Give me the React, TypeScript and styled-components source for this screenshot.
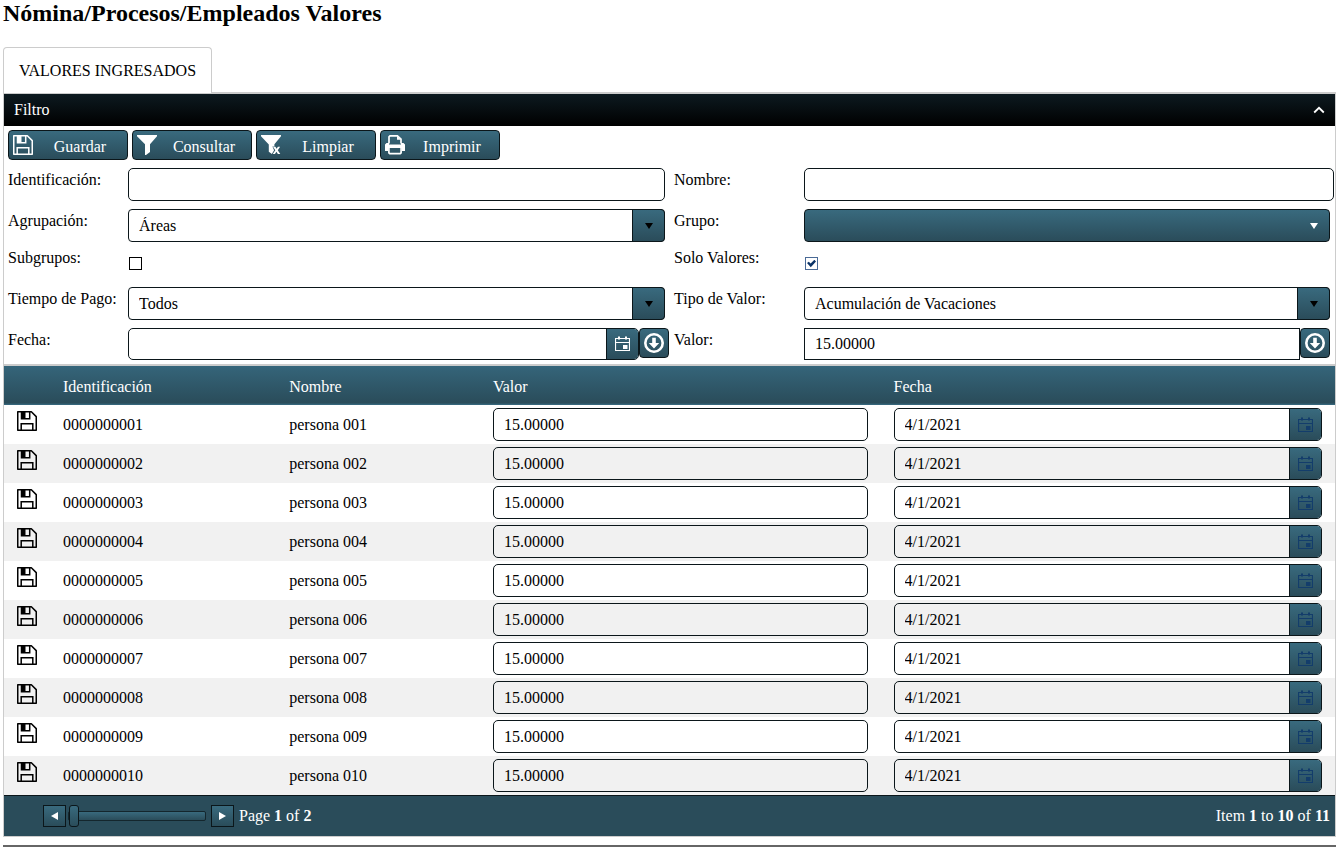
import React, { useState } from "react";
import styled, { createGlobalStyle, css } from "styled-components";

const ink = "#0b161a";
const steel = "linear-gradient(to bottom, #396a7e 0%, #2a4c5a 100%)";
const line = "#cccccc";

const GlobalStyle = createGlobalStyle`
  * { box-sizing: border-box; }
  body {
    margin: 0;
    background: #fff;
    color: #000;
    font: 16px/18px "Liberation Serif", "Times New Roman", serif;
  }
  button, input, select { font: inherit; color: inherit; margin: 0; }
`;

const Page = styled.main`
  padding: 0 5px 0 3px;
`;

const Title = styled.h1`
  margin: 0 0 20px;
  font-size: 24px;
  line-height: 27px;
  font-weight: bold;
`;

const Tabs = styled.div`
  display: flex;
`;

const Tab = styled.button`
  height: 46px;
  padding: 0 15px;
  margin-bottom: -1px;
  border: 1px solid ${line};
  border-bottom: 0;
  border-radius: 4px 4px 0 0;
  background: #fff;
  z-index: 1;
`;

const Panel = styled.section`
  border: 1px solid ${line};
  border-top-width: 2px;
`;

const FilterHeader = styled.header`
  display: flex;
  align-items: center;
  justify-content: space-between;
  height: 32px;
  padding: 0 10px;
  color: #fff;
  background: linear-gradient(to bottom, #0d1a20 0%, #000 100%);
`;

const FilterTitle = styled.h2`
  margin: 0;
  font-size: 16px;
  font-weight: normal;
`;

const CollapseButton = styled.button`
  display: flex;
  padding: 0;
  border: 0;
  background: none;
  color: #fff;
`;

const Toolbar = styled.div`
  display: flex;
  gap: 4px;
  padding: 4px;
`;

const ToolButton = styled.button`
  display: flex;
  align-items: center;
  width: 120px;
  height: 30px;
  padding: 0 0 0 4px;
  border: 1px solid ${ink};
  border-radius: 4px;
  color: #fff;
  background: ${steel};
`;

const ToolText = styled.span`
  flex: 1;
  padding-top: 3px;
  text-align: center;
`;

const Filters = styled.form`
  display: grid;
  grid-template-columns: 120px minmax(0, 541fr) 135px minmax(0, 526fr);
  padding: 0 5px 0 4px;
`;

const Label = styled.label<{ $compact?: boolean; $second?: boolean }>`
  padding-top: ${(p) => (p.$compact ? 3 : 7)}px;
  padding-left: ${(p) => (p.$second ? 5 : 0)}px;
  white-space: nowrap;
`;

const Field = styled.div<{ $inset?: boolean; $wide?: boolean }>`
  display: flex;
  align-items: flex-start;
  padding: 4px 0;
  margin-right: ${(p) => (p.$inset ? 4 : p.$wide ? -4 : 0)}px;
`;

const CheckField = styled.div`
  height: 37px;
  padding: 11px 0 0 1px;
  line-height: 0;
`;

const TextInput = styled.input<{ $square?: boolean; $short?: boolean }>`
  flex: 1;
  min-width: 0;
  width: 100%;
  height: ${(p) => (p.$short ? 32 : 33)}px;
  padding: 0 10px;
  border: 1px solid ${ink};
  border-radius: ${(p) => (p.$square ? 0 : 5)}px;
  background: transparent;
  outline: none;
`;

const SelectBox = styled.div`
  flex: 1;
  display: grid;
  grid-template-columns: minmax(0, 1fr) 33px;
  height: 33px;
`;

const Select = styled.select<{ $filled?: boolean }>`
  grid-row: 1;
  grid-column: 1 / 3;
  appearance: none;
  padding: 0 10px;
  border: 1px solid ${ink};
  border-radius: 4px;
  background: ${(p) => (p.$filled ? steel : "#fff")};
  outline: none;
`;

const SelectArrow = styled.span<{ $plain?: boolean }>`
  grid-row: 1;
  grid-column: 2;
  display: flex;
  align-items: center;
  justify-content: center;
  pointer-events: none;
  border: 1px solid transparent;
  color: #fff;
  ${(p) =>
    !p.$plain &&
    css`
      border-color: ${ink};
      border-radius: 0 4px 4px 0;
      background: ${steel};
      color: #000;
    `}
`;

const CheckBox = styled.input`
  appearance: none;
  display: inline-grid;
  place-items: center;
  width: 13px;
  height: 13px;
  border: 1px solid #000;
  background: #fff;
  &:checked {
    border-color: #4a6a96;
  }
  &:checked::before {
    content: "";
    width: 9px;
    height: 8px;
    background: #0c3468;
    clip-path: polygon(0 45%, 20% 28%, 40% 50%, 82% 4%, 100% 24%, 42% 96%);
  }
`;

const DateBox = styled.div<{ $short?: boolean }>`
  flex: 1;
  display: flex;
  min-width: 0;
  height: ${(p) => (p.$short ? 32 : 33)}px;
  border: 1px solid ${ink};
  border-radius: 5px;
  overflow: hidden;
`;

const DateInput = styled.input`
  flex: 1;
  min-width: 0;
  padding: 0 10px;
  border: 0;
  background: transparent;
  outline: none;
`;

const DateButton = styled.button`
  display: flex;
  align-items: center;
  justify-content: center;
  width: 32px;
  padding: 0;
  border: 0;
  border-left: 1px solid ${ink};
  background: ${steel};
  color: #fff;
  &:disabled { color: #133d6b; }
`;

const ApplyButton = styled.button`
  display: flex;
  align-items: center;
  justify-content: center;
  width: 30px;
  height: 30px;
  padding: 0;
  border: 1px solid ${ink};
  border-radius: 4px;
  background: ${steel};
  color: #fff;
`;

const Results = styled.div`
  border-top: 2px solid ${line};
`;

const Table = styled.table`
  width: 100%;
  table-layout: fixed;
  border-collapse: collapse;
`;

const Col = styled.col<{ $width?: string }>`
  width: ${(p) => p.$width ?? "auto"};
`;

const HeadRow = styled.tr`
  height: 39px;
  background: linear-gradient(to bottom, #35657a 0%, #2a4c5a 95%, #35657a 98%);
`;

const HeadCell = styled.th`
  padding: 2px 13px 0;
  color: #fff;
  font-weight: normal;
  text-align: left;
`;

const Row = styled.tr`
  height: 39px;
  &:nth-child(even) { background: #f1f1f1; }
`;

const Cell = styled.td`
  padding: 0 13px;
`;

const SaveButton = styled.button`
  display: block;
  margin-bottom: 4px;
  padding: 0;
  border: 0;
  background: none;
`;

const CellField = styled.div`
  display: flex;
`;

const Pager = styled.footer`
  display: flex;
  align-items: center;
  height: 41px;
  padding: 0 5px 0 39px;
  border-top: 1px solid ${ink};
  background: #2a4c5a;
  color: #fff;
`;

const PageButton = styled.button`
  display: flex;
  align-items: center;
  justify-content: center;
  width: 23px;
  height: 22px;
  padding: 0;
  border: 1px solid ${ink};
  background: ${steel};
  color: #fff;
`;

const PageSlider = styled.input`
  appearance: none;
  width: 138px;
  height: 22px;
  margin: 0 5px 0 2px;
  background: none;
  &::-webkit-slider-runnable-track {
    height: 10px;
    border: 1px solid #14262d;
    border-radius: 2px;
    background: ${steel};
  }
  &::-webkit-slider-thumb {
    appearance: none;
    width: 10px;
    height: 22px;
    margin-top: -7px;
    border: 1px solid ${ink};
    border-radius: 3px;
    background: ${steel};
  }
`;

const PageText = styled.span`
  margin-left: 5px;
`;

const ItemText = styled.span`
  margin-left: auto;
`;

const Rule = styled.hr`
  height: 2px;
  margin: 8px 0 0;
  border: 0;
  background: #666;
`;

const SaveIcon = () => (
  <svg width="20" height="20" viewBox="0 0 20 20" fill="none" stroke="currentColor" strokeWidth="1.5" aria-hidden="true">
    <path d="M.75.75h13.6l4.9 4.9v13.6H.75z" strokeLinejoin="round" />
    <path d="M4.5.75v7h8.2v-7M4.2 19v-6.3h11.6V19" />
    <path d="M4.5.75h4v7h-4z" fill="currentColor" stroke="none" />
  </svg>
);

const FilterIcon = () => (
  <svg width="20" height="20" viewBox="0 0 20 20" fill="currentColor" aria-hidden="true">
    <path d="M0 0h20v1.2L13 9.3V17l-4 3H8V9.3L0 1.2z" />
  </svg>
);

const ClearFilterIcon = () => (
  <svg width="20" height="20" viewBox="0 0 20 20" fill="currentColor" aria-hidden="true">
    <path d="M0 0h20v1.2l-6.6 8v2.4h-2l1.7 3.6-2.3 3.7L9.6 18 7.8 16.8V9.6L0 1.2z" />
    <path d="M12 11.8h2.4l1.2 2 1.3-2h2.2l-2.3 3.5 2.5 3.7h-2.4l-1.5-2.2-1.4 2.2h-2.3l2.6-3.8z" />
  </svg>
);

const PrintIcon = () => (
  <svg width="20" height="20" viewBox="0 0 20 20" aria-hidden="true">
    <path d="M4 8.5V1.8L5 .9h7.4L16 4.2v4.3" fill="none" stroke="currentColor" strokeWidth="1.7" />
    <path d="M12 1v3.8h4z" fill="currentColor" />
    <path d="M1.5 8H4v1.5h12V8h2.5L20 9.5V16h-3v-3H3v3H0V9.5z" fill="currentColor" />
    <path d="M3.9 12.8v5l.9.9h10.4l.9-.9v-5" fill="none" stroke="currentColor" strokeWidth="1.7" />
  </svg>
);

const CalendarIcon = () => (
  <svg width="15" height="16" viewBox="0 0 15 16" fill="none" stroke="currentColor" aria-hidden="true">
    <path d="M.5 2.5h14v12H.5zM0 6.5h15" strokeWidth="1.2" />
    <path d="M4 .5v3M11 .5v3" strokeWidth="2" />
    <path d="M8 9h4.5v4H8z" fill="currentColor" stroke="none" />
  </svg>
);

const DownCircleIcon = () => (
  <svg width="20" height="20" viewBox="0 0 20 20" aria-hidden="true">
    <circle cx="10" cy="10" r="8.7" fill="none" stroke="currentColor" strokeWidth="2.6" />
    <path d="M8.2 4.8h3.6V10h3.4L10 15.4 4.8 10h3.4z" fill="currentColor" />
  </svg>
);

const ChevronUpIcon = () => (
  <svg width="12" height="8" viewBox="0 0 12 8" fill="none" stroke="currentColor" strokeWidth="1.8" aria-hidden="true">
    <path d="M1.2 6.5 6 1.8l4.8 4.7" />
  </svg>
);

const Triangle = ({ points, width = 8, height = 6 }: { points: string; width?: number; height?: number }) => (
  <svg width={width} height={height} viewBox={`0 0 ${width} ${height}`} fill="currentColor" aria-hidden="true">
    <polygon points={points} />
  </svg>
);

interface DropDownProps {
  id: string;
  options: string[];
  filled?: boolean;
}

const DropDown = ({ id, options, filled }: DropDownProps) => (
  <SelectBox>
    <Select id={id} $filled={filled}>
      {options.map((o) => (
        <option key={o}>{o}</option>
      ))}
    </Select>
    <SelectArrow $plain={filled}>
      <Triangle points="0,0 8,0 4,6" />
    </SelectArrow>
  </SelectBox>
);

const tools = [
  { text: "Guardar", Icon: SaveIcon },
  { text: "Consultar", Icon: FilterIcon },
  { text: "Limpiar", Icon: ClearFilterIcon },
  { text: "Imprimir", Icon: PrintIcon },
];

const employees = Array.from({ length: 10 }, (_, i) => ({
  id: String(i + 1).padStart(10, "0"),
  name: `persona ${String(i + 1).padStart(3, "0")}`,
  value: "15.00000",
  date: "4/1/2021",
}));

export default function App() {
  const [page, setPage] = useState(1);

  return (
    <>
      <GlobalStyle />
      <Page>
        <Title>Nómina/Procesos/Empleados Valores</Title>
        <Tabs role="tablist">
          <Tab type="button" role="tab" aria-selected="true">VALORES INGRESADOS</Tab>
        </Tabs>
        <Panel>
          <FilterHeader>
            <FilterTitle>Filtro</FilterTitle>
            <CollapseButton type="button" aria-label="Contraer filtro">
              <ChevronUpIcon />
            </CollapseButton>
          </FilterHeader>
          <Toolbar>
            {tools.map(({ text, Icon }) => (
              <ToolButton key={text} type="button">
                <Icon />
                <ToolText>{text}</ToolText>
              </ToolButton>
            ))}
          </Toolbar>
          <Filters>
            <Label htmlFor="identificacion">Identificación:</Label>
            <Field $inset><TextInput id="identificacion" /></Field>
            <Label htmlFor="nombre" $second>Nombre:</Label>
            <Field $wide><TextInput id="nombre" /></Field>

            <Label htmlFor="agrupacion">Agrupación:</Label>
            <Field $inset><DropDown id="agrupacion" options={["Áreas"]} /></Field>
            <Label htmlFor="grupo" $second>Grupo:</Label>
            <Field><DropDown id="grupo" options={[""]} filled /></Field>

            <Label htmlFor="subgrupos" $compact>Subgrupos:</Label>
            <CheckField><CheckBox id="subgrupos" type="checkbox" /></CheckField>
            <Label htmlFor="solo-valores" $compact $second>Solo Valores:</Label>
            <CheckField><CheckBox id="solo-valores" type="checkbox" defaultChecked /></CheckField>

            <Label htmlFor="tiempo">Tiempo de Pago:</Label>
            <Field $inset><DropDown id="tiempo" options={["Todos"]} /></Field>
            <Label htmlFor="tipo" $second>Tipo de Valor:</Label>
            <Field><DropDown id="tipo" options={["Acumulación de Vacaciones"]} /></Field>

            <Label htmlFor="fecha">Fecha:</Label>
            <Field>
              <DateBox $short>
                <DateInput id="fecha" />
                <DateButton type="button" aria-label="Abrir calendario"><CalendarIcon /></DateButton>
              </DateBox>
              <ApplyButton type="button" aria-label="Aplicar fecha"><DownCircleIcon /></ApplyButton>
            </Field>
            <Label htmlFor="valor" $second>Valor:</Label>
            <Field>
              <TextInput id="valor" defaultValue="15.00000" $square $short />
              <ApplyButton type="button" aria-label="Aplicar valor"><DownCircleIcon /></ApplyButton>
            </Field>
          </Filters>
          <Results>
            <Table>
              <colgroup>
                <Col $width="46px" />
                <Col $width="17%" />
                <Col $width="15.3%" />
                <Col $width="30.1%" />
                <Col />
              </colgroup>
              <thead>
                <HeadRow>
                  <HeadCell aria-label="Acciones" />
                  <HeadCell>Identificación</HeadCell>
                  <HeadCell>Nombre</HeadCell>
                  <HeadCell>Valor</HeadCell>
                  <HeadCell>Fecha</HeadCell>
                </HeadRow>
              </thead>
              <tbody>
                {employees.map((e) => (
                  <Row key={e.id}>
                    <Cell>
                      <SaveButton type="button" aria-label={`Guardar ${e.name}`}><SaveIcon /></SaveButton>
                    </Cell>
                    <Cell>{e.id}</Cell>
                    <Cell>{e.name}</Cell>
                    <Cell>
                      <CellField><TextInput aria-label={`Valor ${e.name}`} defaultValue={e.value} /></CellField>
                    </Cell>
                    <Cell>
                      <DateBox>
                        <DateInput aria-label={`Fecha ${e.name}`} defaultValue={e.date} />
                        <DateButton type="button" disabled aria-label="Abrir calendario"><CalendarIcon /></DateButton>
                      </DateBox>
                    </Cell>
                  </Row>
                ))}
              </tbody>
            </Table>
            <Pager>
              <PageButton type="button" aria-label="Página anterior" onClick={() => setPage(1)}>
                <Triangle points="7,0 7,8 0,4" width={7} height={8} />
              </PageButton>
              <PageSlider
                type="range"
                min={1}
                max={2}
                value={page}
                aria-label="Página"
                onChange={(ev) => setPage(Number(ev.target.value))}
              />
              <PageButton type="button" aria-label="Página siguiente" onClick={() => setPage(2)}>
                <Triangle points="0,0 7,4 0,8" width={7} height={8} />
              </PageButton>
              <PageText>Page <b>{page}</b> of <b>2</b></PageText>
              <ItemText>Item <b>1</b> to <b>10</b> of <b>11</b></ItemText>
            </Pager>
          </Results>
        </Panel>
        <Rule />
      </Page>
    </>
  );
}
